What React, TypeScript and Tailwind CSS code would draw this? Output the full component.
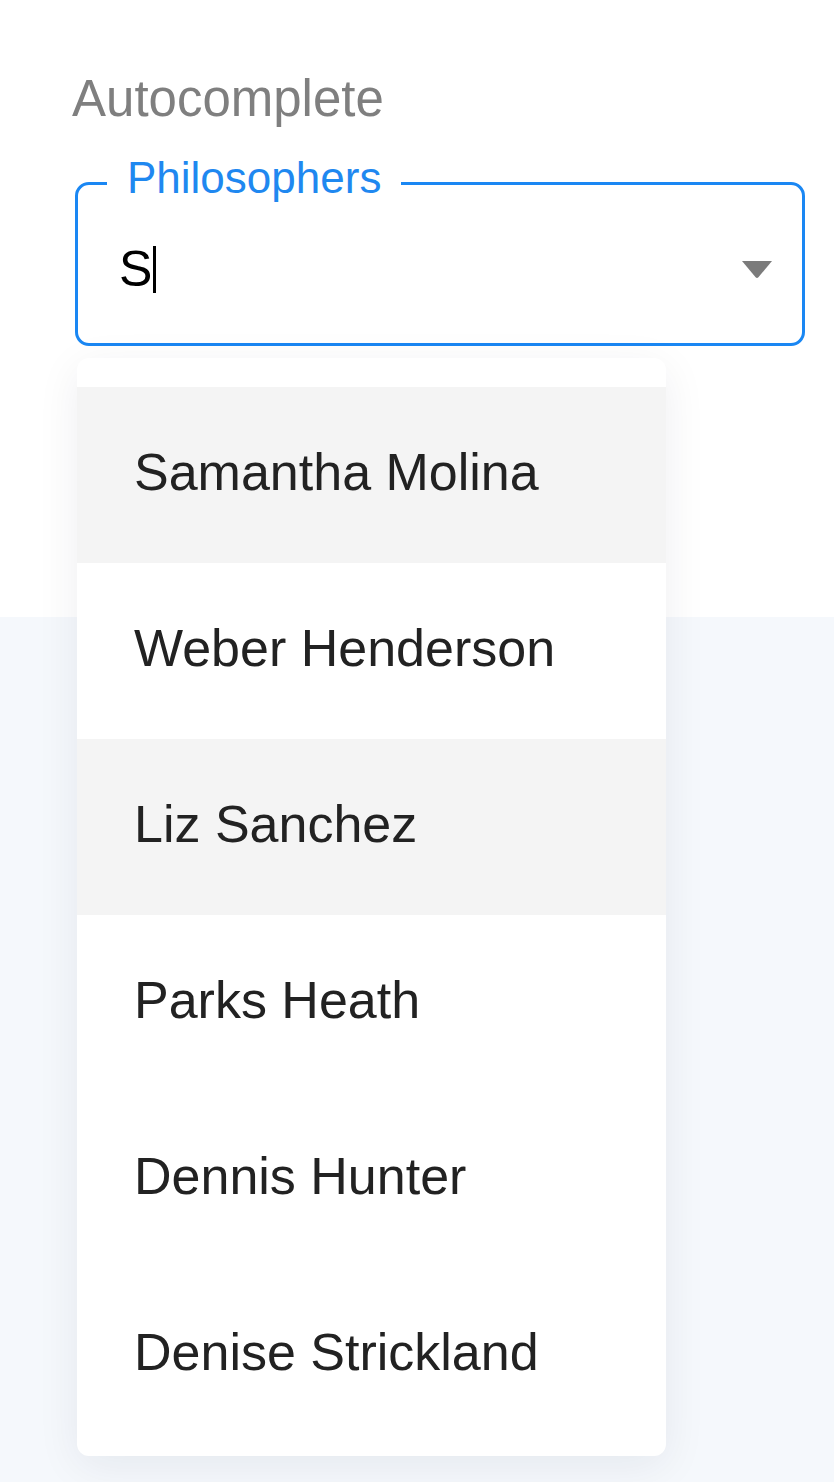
import React from "react";

const options = [
  { name: "Samantha Molina", active: true },
  { name: "Weber Henderson", active: false },
  { name: "Liz Sanchez", active: true },
  { name: "Parks Heath", active: false },
  { name: "Dennis Hunter", active: false },
  { name: "Denise Strickland", active: false },
];

function ArrowDown() {
  return (
    <svg width="32" height="19" viewBox="0 0 32 19" className="shrink-0">
      <path d="M1 1 H31 L17.4 17.2 Q16 18.6 14.6 17.2 Z" fill="#7b7b7b" />
    </svg>
  );
}

export default function App() {
  return (
    <div className="min-h-[1482px] bg-[#f5f8fc] font-['Liberation_Sans',Arial,sans-serif]">
      {/* white demo section */}
      <section className="h-[617px] bg-white pl-[72px] pr-[29px] pt-[73px]">
        <h2 className="text-[51px] leading-[51px] text-[#7f7f7f]">Autocomplete</h2>

        {/* outlined input */}
        <div className="relative ml-[3px] mt-[58px]">
          <div className="flex h-[164px] items-center justify-between rounded-[14px] border-[3px] border-[#1a87f3] bg-white pl-[41px] pr-[29px] pt-[10px]">
            <div className="flex items-center">
              <span className="text-[50px] leading-[50px] text-black">S</span>
              <span className="ml-[1px] h-[47px] w-[3px] bg-black" />
            </div>
            <ArrowDown />
          </div>
          <label className="absolute left-[32px] top-[-26px] bg-white px-[20px] text-[44px] leading-[44px] text-[#1f88f0]">
            Philosophers
          </label>

          {/* popup list */}
          <ul className="absolute left-[2px] top-[176px] z-10 w-[589px] rounded-[12px] bg-white pb-[13px] pt-[29px] shadow-[0_10px_44px_rgba(20,30,60,0.07)]">
            {options.map((o) => (
              <li
                key={o.name}
                className={`flex h-[176px] items-center pb-[7px] pl-[57px] text-[52px] leading-[52px] text-[#222222] ${
                  o.active ? "bg-[#f4f4f4]" : "bg-white"
                }`}
              >
                {o.name}
              </li>
            ))}
          </ul>
        </div>
      </section>
    </div>
  );
}
